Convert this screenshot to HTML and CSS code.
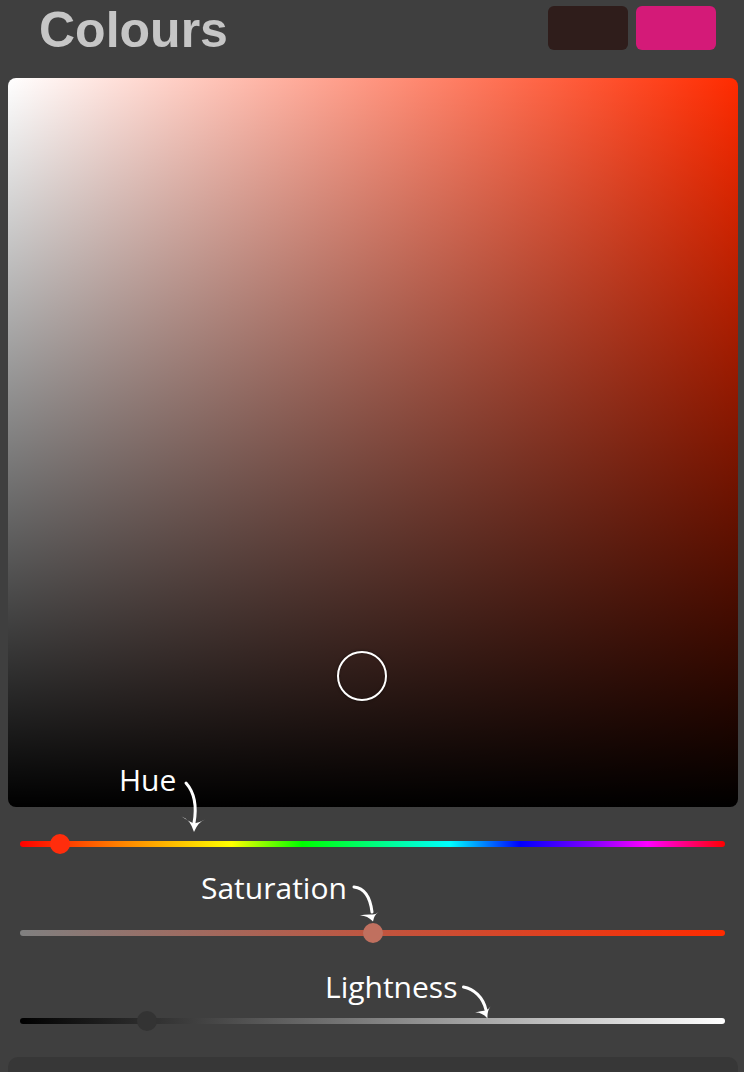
FILE: index.html
```html
<!DOCTYPE html>
<html lang="en">
<head>
<meta charset="utf-8">
<title>Colours</title>
<link rel="stylesheet" href="styles.css">
</head>
<body>
<div class="page">
  <header class="header">
    <h1 class="title">Colours</h1>
    <div class="swatches">
      <div class="swatch swatch-current"></div>
      <div class="swatch swatch-accent"></div>
    </div>
  </header>

  <div class="picker">
    <div class="picker-handle"></div>
  </div>

  <div class="sliders">
    <div class="slider">
      <div class="track track-hue"></div>
      <div class="thumb thumb-hue" style="left: 5.67%"></div>
    </div>
    <div class="slider">
      <div class="track track-sat"></div>
      <div class="thumb thumb-sat" style="left: 50%"></div>
    </div>
    <div class="slider">
      <div class="track track-light"></div>
      <div class="thumb thumb-light" style="left: 18%"></div>
    </div>
  </div>

  <div class="panel"></div>

  <div class="annotations">
    <span class="note note-hue">Hue</span>
    <span class="note note-sat">Saturation</span>
    <span class="note note-light">Lightness</span>
    <svg class="arrows" width="744" height="1072" viewBox="0 0 744 1072">
      <g fill="none" stroke="#fff" stroke-width="3" stroke-linecap="round">
        <path d="M186 783 C 194 792, 197 806, 194 823"/>
        <path d="M354 887 C 363 888, 370 895, 372 912"/>
        <path d="M463.5 987 C 474 989, 483 997, 486 1010"/>
      </g>
      <g fill="#fff">
        <path d="M181.5 816.5 Q 190 819 194 832 Q 198 822 205 819.5 Q 199 823 194 823.5 Q 188 821 181.5 816.5 Z"/>
        <path d="M359.5 915.5 Q 367 915 373 921.5 Q 374 915 378.5 912 Q 375 915 372 914.5 Q 366 914 359.5 915.5 Z"/>
        <path d="M475 1012.5 Q 482 1012 487.5 1018.5 Q 487 1011 490.5 1006.5 Q 488 1010 485.5 1010.5 Q 481 1011 475 1012.5 Z"/>
      </g>
    </svg>
  </div>
</div>
</body>
</html>
```

FILE: styles.css
```css
html, body {
  margin: 0;
  padding: 0;
  background: #3f3f3f;
}

body {
  font-family: "Liberation Sans", Arial, sans-serif;
  overflow: hidden;
}

.page {
  position: relative;
  width: 744px;
  height: 1072px;
  overflow: hidden;
}

.header {
  box-sizing: border-box;
  height: 78px;
  padding: 6px 28px 0 39px;
  display: flex;
  justify-content: space-between;
  align-items: flex-start;
}

.title {
  margin: 0;
  font-family: "Liberation Sans", Arial, sans-serif;
  font-weight: 700;
  font-size: 50px;
  line-height: 49px;
  color: #c6c6c6;
}

.swatches {
  display: flex;
  gap: 8px;
}

.swatch {
  width: 80px;
  height: 44px;
  border-radius: 6px;
}

.swatch-current {
  background: #2f1d1b;
}

.swatch-accent {
  background: #d41a78;
}

.picker {
  position: relative;
  height: 729px;
  margin: 0 6px 0 8px;
  border-radius: 8px;
  background:
    linear-gradient(to top, #000 0%, rgba(0, 0, 0, 0) 100%),
    linear-gradient(to right, #fff 0%, #ff2b00 100%);
}

.picker-handle {
  position: absolute;
  left: 329px;
  top: 573px;
  width: 46px;
  height: 46px;
  border: 2px solid #fff;
  border-radius: 50%;
  box-shadow: 0 0 3px rgba(0, 0, 0, 0.6), inset 0 0 2px rgba(0, 0, 0, 0.4);
}

.sliders {
  margin-top: 27px;
  display: flex;
  flex-direction: column;
  gap: 68.5px;
}

.slider {
  position: relative;
  height: 20px;
  margin: 0 19px 0 20px;
  display: flex;
  align-items: center;
}

.track {
  flex: 1;
  height: 6px;
  border-radius: 3px;
}

.track-hue {
  background: linear-gradient(to right,
    #ff0000 0%,
    #ff8000 14%,
    #ffff00 30%,
    #00ff00 40%,
    #00ffff 61%,
    #0000ff 71%,
    #8000ff 81%,
    #ff00ff 89%,
    #ff0000 100%);
}

.track-sat {
  background: linear-gradient(to right, #808080 0%, #ff2b00 100%);
}

.track-light {
  background: linear-gradient(to right, #000 0%, #fff 100%);
}

.thumb {
  position: absolute;
  top: 0;
  width: 20px;
  height: 20px;
  margin-left: -10px;
  border-radius: 50%;
}

.thumb-hue {
  background: #ff2d0c;
}

.thumb-sat {
  background: #c0705f;
}

.thumb-light {
  background: #333333;
}

.panel {
  margin: 25.5px 6px 0 8px;
  height: 40px;
  border-radius: 10px 10px 0 0;
  background: #373737;
}

.annotations {
  position: absolute;
  inset: 0;
  pointer-events: none;
}

.note {
  position: absolute;
  font-family: "Open Sans", "Noto Sans", sans-serif;
  font-size: 30px;
  line-height: 30px;
  color: #fff;
  white-space: nowrap;
}

.note-hue {
  left: 119px;
  top: 765px;
}

.note-sat {
  left: 201px;
  top: 873px;
}

.note-light {
  left: 325px;
  top: 972px;
}

.arrows {
  position: absolute;
  left: 0;
  top: 0;
}
```
